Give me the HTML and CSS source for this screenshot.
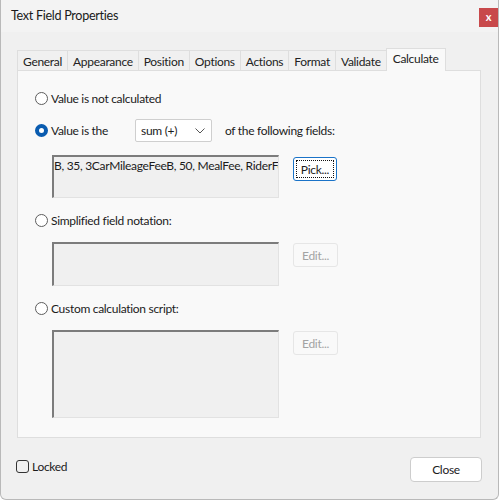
FILE: index.html
```html
<!DOCTYPE html>
<html>
<head>
<meta charset="utf-8">
<link rel="stylesheet" href="styles.css">
</head>
<body>
<div class="window">
  <div class="titlebar">
    <div class="title">Text Field Properties</div>
    <div class="close">x</div>
  </div>
  <div class="content">
    <div class="tabs">
      <div class="tab">General</div>
      <div class="tab">Appearance</div>
      <div class="tab">Position</div>
      <div class="tab">Options</div>
      <div class="tab">Actions</div>
      <div class="tab">Format</div>
      <div class="tab">Validate</div>
      <div class="tab active">Calculate</div>
    </div>
    <div class="panel">
      <div class="row first">
        <span class="radio"></span><span class="label">Value is not calculated</span>
      </div>
      <div class="row sel-row">
        <div class="sel-label"><span class="radio checked"></span><span class="label">Value is the</span></div>
        <div class="dropdown"><span>sum (+)</span>
          <svg class="chev" width="10" height="6" viewBox="0 0 10 6"><path d="M0.5 0.5 L5 5 L9.5 0.5" fill="none" stroke="#555" stroke-width="1"/></svg>
        </div>
        <span class="after">of the following fields:</span>
      </div>
      <div class="fieldrow">
        <div class="textbox tb1"><span class="tbtext">B, 35, 3CarMileageFeeB, 50, MealFee, RiderFee</span></div>
        <div class="btn pick"><span class="focus">Pick...</span></div>
      </div>
      <div class="row gap">
        <span class="radio"></span><span class="label">Simplified field notation:</span>
      </div>
      <div class="fieldrow">
        <div class="textbox tb2"></div>
        <div class="btn edit">Edit...</div>
      </div>
      <div class="row gap">
        <span class="radio"></span><span class="label">Custom calculation script:</span>
      </div>
      <div class="fieldrow">
        <div class="textbox tb3"></div>
        <div class="btn edit">Edit...</div>
      </div>
    </div>
    <div class="footer">
      <div class="locked"><span class="check"></span><span class="label">Locked</span></div>
      <div class="closebtn">Close</div>
    </div>
  </div>
</div>
</body>
</html>
```

FILE: styles.css
```css
html, body {
  margin: 0;
  padding: 0;
  background: #ffffff;
}
body {
  font-family: "Lato", "Open Sans", sans-serif;
  font-size: 12px;
  letter-spacing: -0.3px;
  color: #1b1b1b;
}
.window {
  width: 499px;
  height: 500px;
  box-sizing: border-box;
  border: 1px solid #b9b9b9;
  border-top: none;
  border-radius: 0 0 6px 6px;
  background: #f0f0f0;
  overflow: hidden;
}
.titlebar {
  height: 32px;
  background: #f3f3f3;
  display: flex;
  align-items: flex-start;
}
.title {
  margin: 8px 0 0 10px;
  font-size: 12.6px;
  color: #1a1a1a;
}
.close {
  margin-left: auto;
  margin-top: 8px;
  margin-right: 0;
  width: 19px;
  height: 19px;
  background: #c8494b;
  color: #fff;
  font-size: 11px;
  font-weight: bold;
  letter-spacing: 0;
  text-align: center;
  line-height: 17px;
}
.content {
  padding: 16px 16px 0 16px;
}
.tabs {
  display: flex;
  align-items: flex-end;
  height: 22px;
  position: relative;
  z-index: 1;
}
.tab {
  height: 20px;
  box-sizing: border-box;
  border: 1px solid #dedede;
  border-bottom: none;
  margin-right: -1px;
  padding: 0 5px;
  line-height: 21px;
  color: #222;
  background: #f0f0f0;
}
.tab.active {
  height: 23px;
  background: #f9f9f9;
  margin-bottom: -1px;
  line-height: 20px;
  padding: 0 6px;
}
.panel {
  width: 464px;
  height: 368px;
  box-sizing: border-box;
  border: 1px solid #dedede;
  background: #f9f9f9;
  padding: 19px 0 0 17px;
}
.row {
  display: flex;
  align-items: center;
  height: 16px;
}
.gap {
  margin-top: 14px;
}
.radio {
  width: 13px;
  height: 13px;
  box-sizing: border-box;
  border: 1px solid #5d5d5d;
  border-radius: 50%;
  background: #fff;
  flex: none;
}
.radio.checked {
  border: 4px solid #0a5cb0;
}
.label {
  margin-left: 3px;
}
.sel-row {
  margin-top: 13px;
  height: 23px;
}
.sel-label {
  width: 100px;
  display: flex;
  align-items: center;
}
.dropdown {
  width: 77px;
  height: 23px;
  box-sizing: border-box;
  border: 1px solid #cfcfcf;
  border-radius: 2px;
  background: #fff;
  display: flex;
  align-items: center;
  justify-content: space-between;
  padding: 0 6px 0 5px;
}
.after {
  margin-left: 13px;
}
.fieldrow {
  display: flex;
  align-items: flex-start;
  margin-top: 13px;
  padding-left: 17px;
}
.gap + .fieldrow {
  margin-top: 14px;
}
.textbox {
  width: 227px;
  box-sizing: border-box;
  background: #f0f0f0;
  border-top: 2px solid #7c7c7c;
  border-left: 2px solid #7c7c7c;
  border-right: 1px solid #e2e2e2;
  border-bottom: 1px solid #e2e2e2;
  overflow: hidden;
  white-space: nowrap;
}
.tb1 { height: 43px; }
.tb2 { height: 44px; }
.tb3 { height: 88px; }
.tbtext {
  display: block;
  padding: 1px 0 0 0;
  line-height: 15px;
}
.btn {
  width: 45px;
  height: 24px;
  box-sizing: border-box;
  margin-left: 14px;
  border-radius: 3px;
  display: flex;
  align-items: center;
  justify-content: center;
}
.pick {
  width: 44px;
  margin-top: 2px;
  border: 1px solid #1a73c8;
  background: #fff;
  padding: 2px;
}
.focus {
  display: flex;
  align-items: center;
  justify-content: center;
  width: 100%;
  height: 100%;
  box-sizing: border-box;
  border: 1px dotted #111;
}
.edit {
  margin-top: 1px;
  border: 1px solid #e6e6e6;
  background: #f9f9f9;
  color: #a3a3a3;
}
.footer {
  display: flex;
  justify-content: space-between;
  align-items: center;
  margin-top: 19px;
  margin-left: -1px;
  width: 466px;
}
.locked {
  display: flex;
  align-items: center;
  margin-top: -6px;
}
.check {
  width: 13px;
  height: 13px;
  box-sizing: border-box;
  border: 1px solid #333;
  border-radius: 3px;
}
.closebtn {
  width: 72px;
  height: 25px;
  box-sizing: border-box;
  border: 1px solid #cdcdcd;
  border-radius: 4px;
  background: #fff;
  display: flex;
  align-items: center;
  justify-content: center;
}
```
